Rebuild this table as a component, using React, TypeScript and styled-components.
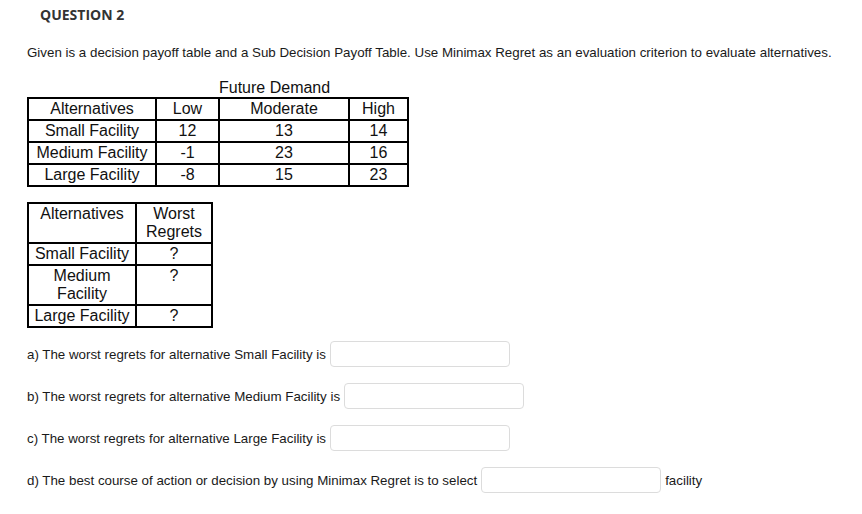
import styled, { createGlobalStyle } from 'styled-components';

const GlobalStyle = createGlobalStyle`
  body {
    margin: 0;
    background: #fff;
    font-family: "Liberation Sans", Arial, sans-serif;
    color: #222;
  }
`;

const Page = styled.div`
  padding: 5px 0 0 27px;
`;

const Title = styled.h2`
  margin: 0 0 0 13px;
  font-family: "Open Sans", sans-serif;
  font-size: 14px;
  font-weight: 700;
  line-height: 19px;
  color: #333;
`;

const Prompt = styled.p`
  margin: 21px 0 0;
  font-size: 13.33px;
  line-height: 16px;
  color: #1a1a1a;
`;

const Caption = styled.div`
  margin: 18px 0 0 192px;
  font-size: 16px;
  line-height: 18px;
  color: #111;
`;

const Grid = styled.table<{ $top?: number }>`
  border-collapse: collapse;
  table-layout: fixed;
  margin-top: ${(p) => p.$top ?? 0}px;
  font-size: 16px;
  line-height: 18px;
  color: #111;
`;

const Cell = styled.td<{ $w?: number; $top?: boolean }>`
  border: 2px solid #000;
  padding: 1px 2px;
  text-align: center;
  vertical-align: ${(p) => (p.$top ? 'top' : 'middle')};
  ${(p) => (p.$w ? `width: ${p.$w}px;` : '')}
`;

const Questions = styled.div`
  margin-top: 13px;
  display: flex;
  flex-direction: column;
  gap: 16px;
`;

const Row = styled.div`
  display: flex;
  align-items: center;
  gap: 4px;
  font-size: 13.33px;
  color: #1a1a1a;
`;

const Answer = styled.input`
  box-sizing: border-box;
  width: 180px;
  height: 26px;
  border: 1px solid #dcdcdc;
  border-radius: 4px;
  background: #fff;
  padding: 0 6px;
  font: inherit;
`;

const payoffs = [
  ['Small Facility', '12', '13', '14'],
  ['Medium Facility', '-1', '23', '16'],
  ['Large Facility', '-8', '15', '23'],
];

const questions = [
  { text: 'a) The worst regrets for alternative Small Facility is' },
  { text: 'b) The worst regrets for alternative Medium Facility is' },
  { text: 'c) The worst regrets for alternative Large Facility is' },
  { text: 'd) The best course of action or decision by using Minimax Regret is to select', after: 'facility' },
];

export default function App() {
  return (
    <Page>
      <GlobalStyle />
      <Title>QUESTION 2</Title>
      <Prompt>
        Given is a decision payoff table and a Sub Decision Payoff Table. Use Minimax Regret as an evaluation criterion to evaluate alternatives.
      </Prompt>

      <Caption>Future Demand</Caption>
      <Grid>
        <tbody>
          <tr>
            <Cell $w={122}>Alternatives</Cell>
            <Cell $w={57}>Low</Cell>
            <Cell $w={124}>Moderate</Cell>
            <Cell $w={53}>High</Cell>
          </tr>
          {payoffs.map((r) => (
            <tr key={r[0]}>
              {r.map((v, i) => (
                <Cell key={i}>{v}</Cell>
              ))}
            </tr>
          ))}
        </tbody>
      </Grid>

      <Grid $top={15}>
        <tbody>
          <tr>
            <Cell $w={102} $top>Alternatives</Cell>
            <Cell $w={70} $top>Worst Regrets</Cell>
          </tr>
          <tr>
            <Cell $top>Small Facility</Cell>
            <Cell $top>?</Cell>
          </tr>
          <tr>
            <Cell $top>Medium Facility</Cell>
            <Cell $top>?</Cell>
          </tr>
          <tr>
            <Cell $top>Large Facility</Cell>
            <Cell $top>?</Cell>
          </tr>
        </tbody>
      </Grid>

      <Questions>
        {questions.map((q) => (
          <Row key={q.text}>
            <span>{q.text}</span>
            <Answer type="text" />
            {q.after && <span>{q.after}</span>}
          </Row>
        ))}
      </Questions>
    </Page>
  );
}
